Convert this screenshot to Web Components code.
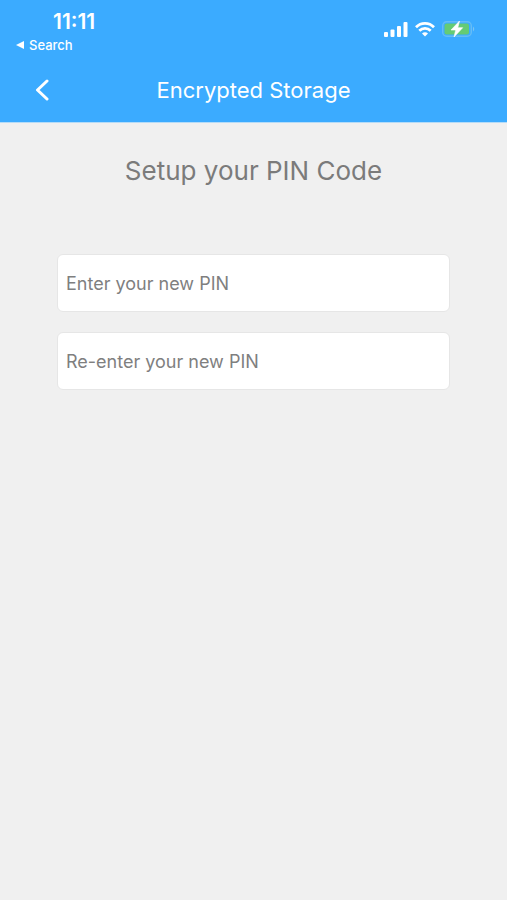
<!DOCTYPE html>
<html lang="en">
    <head>
        <meta charset="utf-8">
        <meta name="viewport" content="width=device-width, initial-scale=1.0">
        <title>Encrypted Storage</title>
        <style>
            body {
                margin: 0;
                min-height: 100vh;
                background: #f0f0f0;
                font-family: Inter, "Liberation Sans", sans-serif;
            }
        </style>
    </head>

    <body>
        <app-header>
            <status-bar slot="status" time="11:11">Search</status-bar>
            Encrypted Storage
        </app-header>
        <pin-form>
            <span slot="heading">Setup your PIN Code</span>
            <pin-field label="Enter your new PIN"></pin-field>
            <pin-field label="Re-enter your new PIN"></pin-field>
        </pin-form>
    </body>

    <script>
        class StatusBar extends HTMLElement {
            constructor() {
                super()
                this.attachShadow({ mode: 'open' })
                this.shadowRoot.innerHTML = `
                <style>
                    :host {
                        display: flex;
                        justify-content: space-between;
                        align-items: flex-start;
                        padding: 10px 32px 0 16px;
                    }
                    .time {
                        padding-left: 37px;
                        font-size: 21px;
                        line-height: 24px;
                        font-weight: 600;
                    }
                    a {
                        display: flex;
                        align-items: center;
                        gap: 5px;
                        color: inherit;
                        font-size: 13px;
                        line-height: 22px;
                        font-weight: 500;
                        text-decoration: none;
                    }
                    .icons {
                        display: flex;
                        align-items: center;
                        gap: 7px;
                        padding-top: 10px;
                    }
                    svg { display: block; }
                </style>
                <div>
                    <div class="time"></div>
                    <a href="#">
                        <svg width="8" height="8" viewBox="0 0 8 8" aria-hidden="true"><path d="M0 4 L8 0 V8 Z" fill="currentColor"/></svg>
                        <slot></slot>
                    </a>
                </div>
                <div class="icons">
                    <svg width="24" height="18" viewBox="0 0 24 18" fill="#fff" aria-label="Signal" role="img">
                        <rect x="0" y="12" width="4" height="5" rx="1"/>
                        <rect x="6.5" y="9.5" width="4" height="7.5" rx="1"/>
                        <rect x="13" y="6" width="4" height="11" rx="1"/>
                        <rect x="19.5" y="2" width="4" height="15" rx="1"/>
                    </svg>
                    <svg width="20" height="18" viewBox="0 0 20 18" fill="none" stroke="#fff" stroke-width="2.7" aria-label="Wi-Fi" role="img">
                        <path d="M1 7.2 C6 2 14 2 19 7.2"/>
                        <path d="M4.3 10.7 C7.5 7.5 12.5 7.5 15.7 10.7"/>
                        <path d="M7 13.5 C8.7 11.9 11.3 11.9 13 13.5 L10 16.5 Z" fill="#fff" stroke="none"/>
                    </svg>
                    <svg width="33" height="18" viewBox="0 0 33 18" aria-label="Battery charging" role="img">
                        <rect x="0.7" y="1.7" width="28.6" height="14.6" rx="4" fill="none" stroke="#65bdf6" stroke-width="1.4"/>
                        <path d="M31 6.5 Q33.5 9 31 11.5 Z" fill="#7cc5f3"/>
                        <rect x="2.5" y="3.5" width="24.5" height="11" rx="2" fill="#65cb74"/>
                        <path d="M17.5 1 L9 10 H13.7 L12 17 L20.7 7.7 H15.8 Z" fill="#fff" stroke="#fff" stroke-width="0.6" stroke-linejoin="round"/>
                    </svg>
                </div>
                `
                this.shadowRoot.querySelector('.time').textContent = this.getAttribute('time')
            }
        }

        class AppHeader extends HTMLElement {
            constructor() {
                super()
                this.attachShadow({ mode: 'open' })
                this.shadowRoot.innerHTML = `
                <style>
                    :host {
                        display: block;
                        background: #3babff;
                        color: #fff;
                        border-bottom: 1px solid #b5dcf8;
                    }
                    nav {
                        display: grid;
                        grid-template-columns: 48px 1fr 48px;
                        align-items: center;
                        padding: 8px 18px 6px;
                    }
                    button {
                        display: flex;
                        align-items: center;
                        justify-content: center;
                        height: 52px;
                        padding: 0;
                        border: 0;
                        background: none;
                        color: inherit;
                        cursor: pointer;
                    }
                    h1 {
                        margin: 0;
                        font-size: 22px;
                        line-height: 28px;
                        font-weight: 400;
                        text-align: center;
                    }
                </style>
                <slot name="status"></slot>
                <nav>
                    <button type="button" aria-label="Back">
                        <svg width="14" height="22" viewBox="0 0 14 22" fill="none" stroke="currentColor" stroke-width="3" stroke-linecap="round" stroke-linejoin="round"><path d="M12 2 L2.500 11 L12 20"/></svg>
                    </button>
                    <h1><slot></slot></h1>
                </nav>
                `
            }
        }

        class PinForm extends HTMLElement {
            constructor() {
                super()
                this.attachShadow({ mode: 'open' })
                this.shadowRoot.innerHTML = `
                <style>
                    :host { display: block; }
                    form {
                        display: flex;
                        flex-direction: column;
                        gap: 65px;
                        padding: 30px 57px;
                    }
                    h2 {
                        margin: 0;
                        color: #7b7b7b;
                        font-size: 26px;
                        line-height: 36px;
                        font-weight: 400;
                        text-align: center;
                    }
                    .fields {
                        display: flex;
                        flex-direction: column;
                        gap: 20px;
                    }
                </style>
                <form>
                    <h2><slot name="heading"></slot></h2>
                    <div class="fields"><slot></slot></div>
                </form>
                `
            }
        }

        class PinField extends HTMLElement {
            constructor() {
                super()
                this.attachShadow({ mode: 'open' })
                this.shadowRoot.innerHTML = `
                <style>
                    :host { display: block; }
                    input {
                        display: block;
                        box-sizing: border-box;
                        width: 100%;
                        height: 58px;
                        padding: 0 8px;
                        border: 1px solid #e6e6e6;
                        border-radius: 6px;
                        background: #fff;
                        color: #444;
                        font: 400 18px Inter, "Liberation Sans", sans-serif;
                    }
                    input::placeholder {
                        color: #7f7f7f;
                        opacity: 1;
                    }
                </style>
                <input type="password" inputmode="numeric" autocomplete="new-password">
                `
                const input = this.shadowRoot.querySelector('input')
                input.placeholder = this.getAttribute('label')
                input.setAttribute('aria-label', this.getAttribute('label'))
            }
        }

        customElements.define('status-bar', StatusBar)
        customElements.define('app-header', AppHeader)
        customElements.define('pin-form', PinForm)
        customElements.define('pin-field', PinField)
    </script>
</html>
